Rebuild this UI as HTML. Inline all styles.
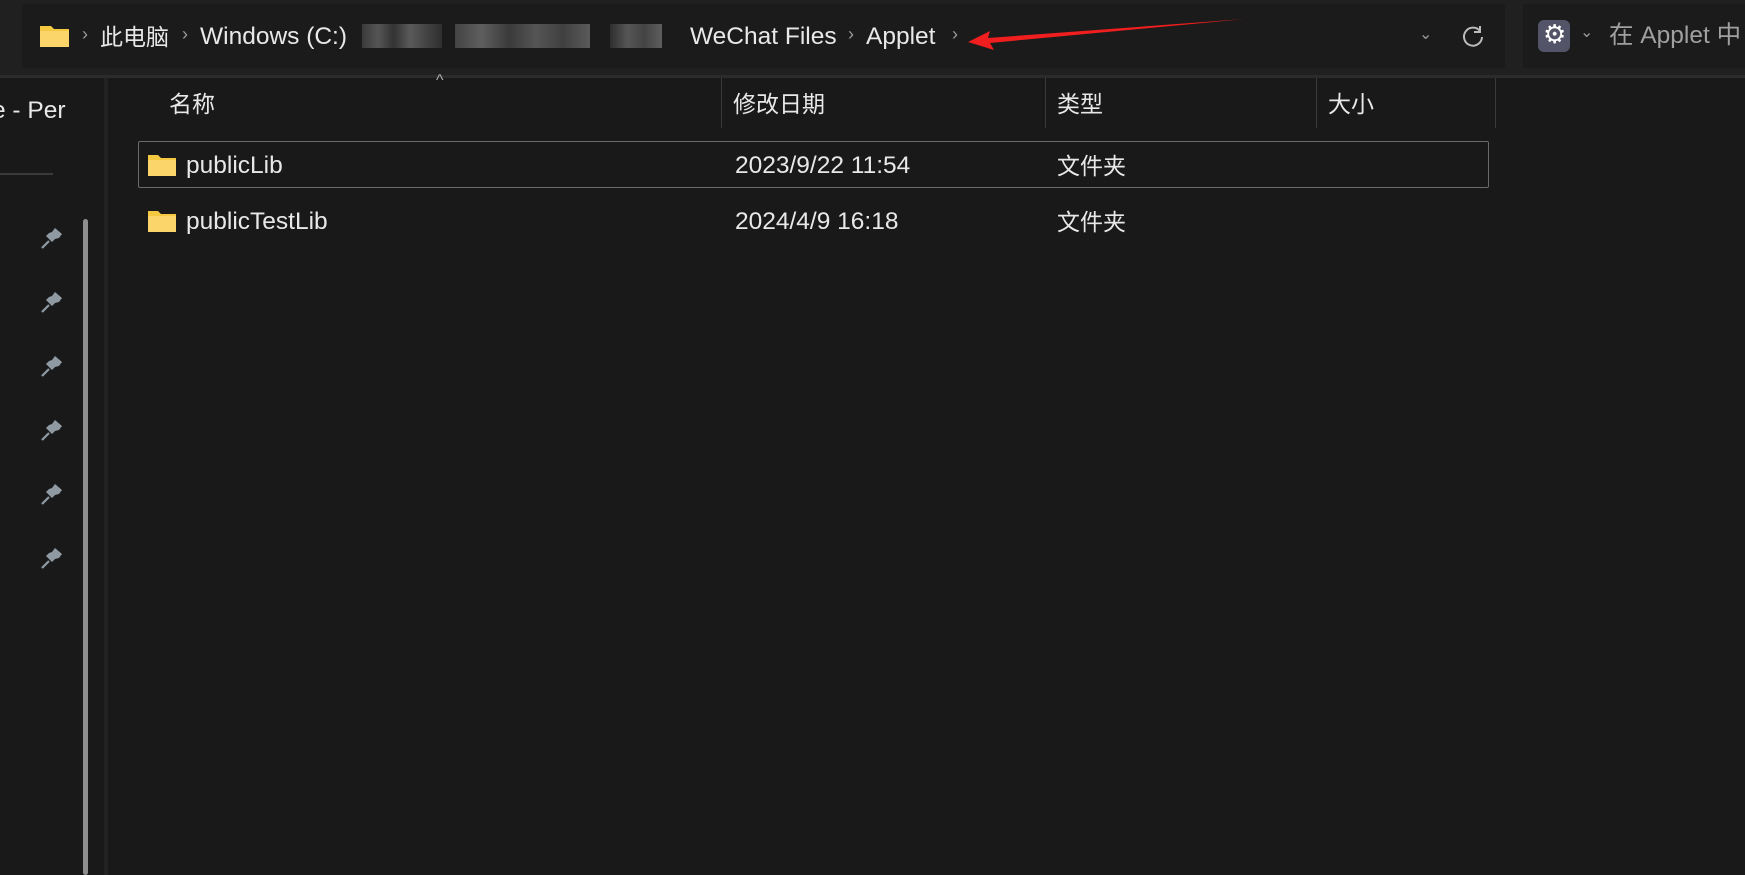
<!DOCTYPE html>
<html><head><meta charset="utf-8"><style>
body{margin:0;width:1745px;height:875px;background:#191919;overflow:hidden;position:relative;font-family:"Liberation Sans","Noto Sans CJK SC",sans-serif;color:#e8e8e8}
.a{position:absolute;white-space:nowrap}
.t{font-size:24.5px;line-height:30px}
.c{font-size:23px;line-height:30px}
.ch{color:#9a9a9a;font-size:18px}
.pin{position:absolute;left:40px;width:24px;height:24px}
.div{position:absolute;top:78px;height:50px;width:1px;background:#3a3a3a}
</style></head><body>
<div class="a" style="left:0;top:0;width:1745px;height:77px;background:#202020"></div>
<div class="a" style="left:0;top:75px;width:1745px;height:3px;background:#2b2b2b"></div>
<div class="a" style="left:22px;top:4px;width:1483px;height:64px;background:#1b1b1b"></div>
<div class="a" style="left:1523px;top:4px;width:230px;height:64px;background:#1b1b1b"></div>
<svg class="a" style="left:39px;top:23px" width="31" height="25"><path d="M1 3h11l3 3h15v18H1z" fill="#f5c842"/><path d="M1 8h29v16H1z" fill="#fbd46a"/></svg>
<div class="a ch" style="left:82px;top:24px">›</div>
<div class="a c" style="left:100px;top:22px">此电脑</div>
<div class="a ch" style="left:182px;top:24px">›</div>
<div class="a t" style="left:200px;top:22px">Windows (C:)</div>
<div class="a" style="left:362px;top:24px;width:80px;height:24px;background:linear-gradient(90deg,#3a3a3a,#555,#333,#5a5a5a,#444,#2e2e2e)"></div>
<div class="a" style="left:455px;top:24px;width:135px;height:24px;background:linear-gradient(90deg,#444,#5e5e5e,#3a3a3a,#555,#404040,#5a5a5a)"></div>
<div class="a" style="left:610px;top:24px;width:52px;height:24px;background:linear-gradient(90deg,#2e2e2e,#555,#444,#5e5e5e)"></div>
<div class="a t" style="left:690px;top:22px">WeChat Files</div>
<div class="a ch" style="left:848px;top:24px">›</div>
<div class="a t" style="left:866px;top:22px">Applet</div>
<div class="a ch" style="left:952px;top:24px">›</div>
<svg class="a" style="left:960px;top:14px" width="290" height="40"><polygon points="8,28 30,17 28,24 285,5 30,29 34,36" fill="#f01e1e"/></svg>
<div class="a ch" style="left:1419px;top:24px;font-size:16px">⌄</div>
<svg class="a" style="left:1461px;top:24px" width="24" height="24"><path d="M19 7A9 9 0 1 0 21 13" fill="none" stroke="#bbb" stroke-width="2"/><path d="M19 2v6h-6" fill="none" stroke="#bbb" stroke-width="2"/></svg>
<div class="a" style="left:1538px;top:20px;width:32px;height:32px;border-radius:6px;background:#545468"></div>
<div class="a" style="left:1543px;top:19px;font-size:26px;color:#fff">⚙</div>
<div class="a ch" style="left:1580px;top:22px;font-size:16px">⌄</div>
<div class="a t" style="left:1609px;top:21px;color:#a0a0a0">在 Applet 中</div>
<div class="a" style="left:104px;top:78px;width:4px;height:797px;background:#222"></div>
<div class="a t" style="left:-8px;top:96px">e - Per</div>
<div class="a" style="left:0;top:173px;width:53px;height:2px;background:#3a3a3a"></div>
<div class="a" style="left:83px;top:219px;width:5px;height:656px;background:#8e8e8e;border-radius:3px"></div>
<svg class="pin" style="top:226px" viewBox="0 0 24 24"><path d="M12 6l3-4 7 6-3 4-4 1-3 3-6-6 3-3z" fill="#8f9aa3"/><path d="M9 15l-7 7" stroke="#8f9aa3" stroke-width="2.2"/></svg>
<svg class="pin" style="top:290px" viewBox="0 0 24 24"><path d="M12 6l3-4 7 6-3 4-4 1-3 3-6-6 3-3z" fill="#8f9aa3"/><path d="M9 15l-7 7" stroke="#8f9aa3" stroke-width="2.2"/></svg>
<svg class="pin" style="top:354px" viewBox="0 0 24 24"><path d="M12 6l3-4 7 6-3 4-4 1-3 3-6-6 3-3z" fill="#8f9aa3"/><path d="M9 15l-7 7" stroke="#8f9aa3" stroke-width="2.2"/></svg>
<svg class="pin" style="top:418px" viewBox="0 0 24 24"><path d="M12 6l3-4 7 6-3 4-4 1-3 3-6-6 3-3z" fill="#8f9aa3"/><path d="M9 15l-7 7" stroke="#8f9aa3" stroke-width="2.2"/></svg>
<svg class="pin" style="top:482px" viewBox="0 0 24 24"><path d="M12 6l3-4 7 6-3 4-4 1-3 3-6-6 3-3z" fill="#8f9aa3"/><path d="M9 15l-7 7" stroke="#8f9aa3" stroke-width="2.2"/></svg>
<svg class="pin" style="top:546px" viewBox="0 0 24 24"><path d="M12 6l3-4 7 6-3 4-4 1-3 3-6-6 3-3z" fill="#8f9aa3"/><path d="M9 15l-7 7" stroke="#8f9aa3" stroke-width="2.2"/></svg>
<div class="a" style="left:436px;top:72px;color:#aaa;font-size:16px">^</div>
<div class="a c" style="left:169px;top:89px">名称</div>
<div class="div" style="left:721px"></div>
<div class="a c" style="left:733px;top:89px">修改日期</div>
<div class="div" style="left:1045px"></div>
<div class="a c" style="left:1057px;top:89px">类型</div>
<div class="div" style="left:1316px"></div>
<div class="a c" style="left:1328px;top:89px">大小</div>
<div class="div" style="left:1495px"></div>
<div class="a" style="left:138px;top:141px;width:1349px;height:45px;border:1px solid #6a6a6a;border-radius:2px"></div>
<svg class="a" style="left:147px;top:153px" width="30" height="24"><path d="M1 2h10l3 3h15v18H1z" fill="#f5c842"/><path d="M1 7h28v16H1z" fill="#fbd46a"/></svg>
<div class="a t" style="left:186px;top:151px">publicLib</div>
<div class="a t" style="left:735px;top:151px">2023/9/22 11:54</div>
<div class="a c" style="left:1057px;top:151px">文件夹</div>
<svg class="a" style="left:147px;top:209px" width="30" height="24"><path d="M1 2h10l3 3h15v18H1z" fill="#f5c842"/><path d="M1 7h28v16H1z" fill="#fbd46a"/></svg>
<div class="a t" style="left:186px;top:207px">publicTestLib</div>
<div class="a t" style="left:735px;top:207px">2024/4/9 16:18</div>
<div class="a c" style="left:1057px;top:207px">文件夹</div>
</body></html>
